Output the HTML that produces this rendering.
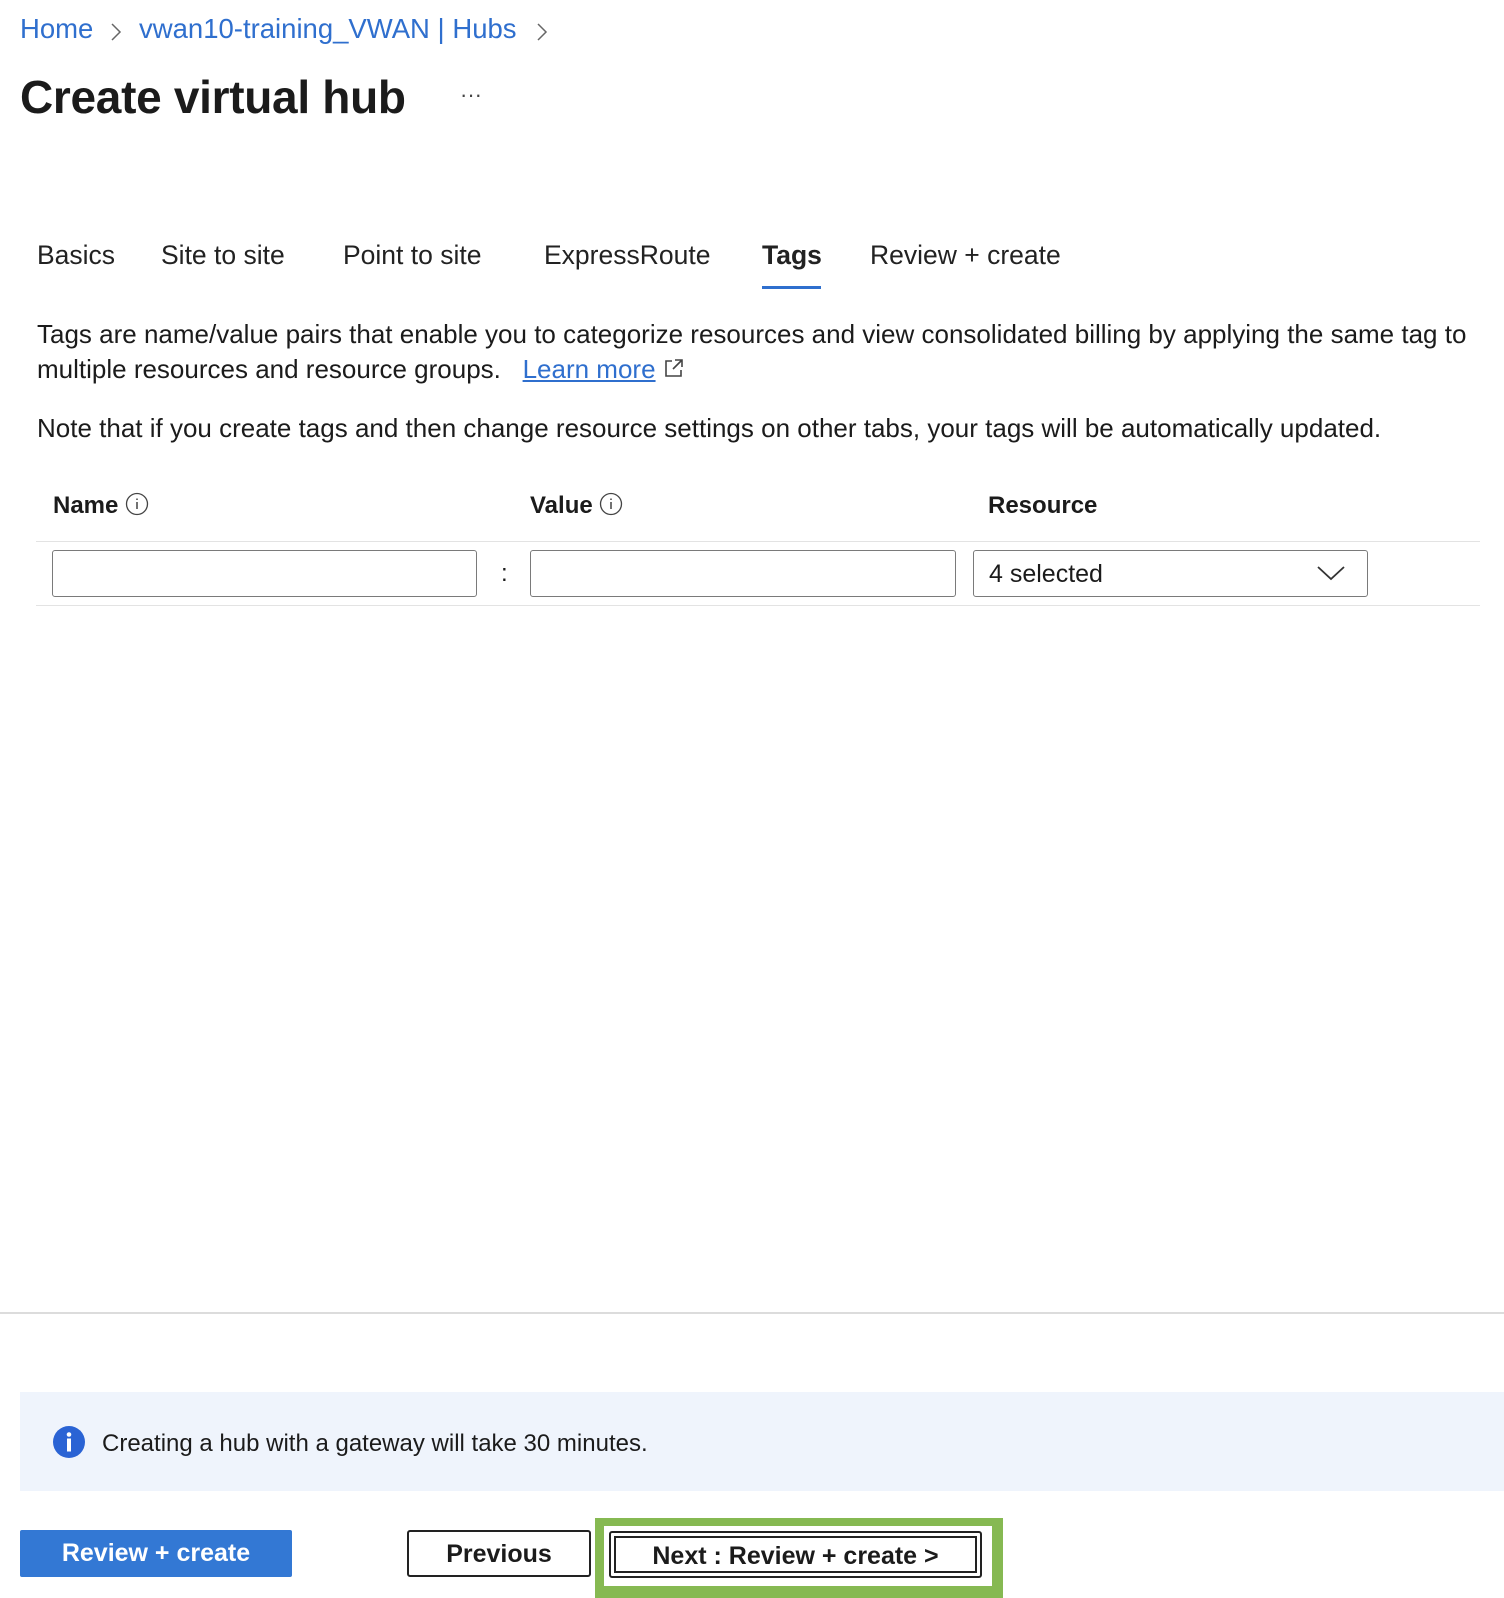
<!DOCTYPE html>
<html><head><style>
body{margin:0;width:1504px;height:1596px;background:#fff;font-family:"Liberation Sans",sans-serif;color:#1b1b1b;position:relative;overflow:hidden}
.a{position:absolute;white-space:nowrap}
.bc{color:#2f6fce;font-size:27.5px;top:13px}
.tab{font-size:26.5px;top:240px;color:#222}
.inp{position:absolute;border:1.5px solid #7a7a7a;border-radius:3px;box-sizing:border-box;height:47px;top:550px}
.btn{position:absolute;box-sizing:border-box;font-size:25px;font-weight:bold;text-align:center;line-height:44px;height:47px;top:1530px}
</style></head><body>
<div class="a bc" style="left:20px">Home</div>
<svg class="a" style="left:110px;top:22px" width="12" height="20"><path d="M2 2l8 8-8 8" fill="none" stroke="#666" stroke-width="1.5"/></svg>
<div class="a bc" style="left:139px">vwan10-training_VWAN | Hubs</div>
<svg class="a" style="left:536px;top:22px" width="12" height="20"><path d="M2 2l8 8-8 8" fill="none" stroke="#666" stroke-width="1.5"/></svg>
<div class="a" style="left:20px;top:70px;font-size:46px;font-weight:bold;letter-spacing:-0.3px">Create virtual hub</div>
<div class="a" style="left:460px;top:82px;font-size:22px;color:#444">···</div>

<div class="a tab" style="left:37px">Basics</div>
<div class="a tab" style="left:161px">Site to site</div>
<div class="a tab" style="left:343px">Point to site</div>
<div class="a tab" style="left:544px">ExpressRoute</div>
<div class="a tab" style="left:762px;font-weight:bold">Tags</div>
<div class="a" style="left:762px;top:286px;width:59px;height:3px;background:#2f6fce"></div>
<div class="a tab" style="left:870px">Review + create</div>

<div class="a" style="left:37px;top:317px;font-size:26px;line-height:35px">Tags are name/value pairs that enable you to categorize resources and view consolidated billing by applying the same tag to<br>multiple resources and resource groups. &nbsp;&nbsp;<span style="color:#2f6fce;text-decoration:underline">Learn more</span> <svg width="22" height="22" style="vertical-align:-1px"><path d="M9 4H3v15h15v-6M12 3h7v7M19 3l-9 9" fill="none" stroke="#444" stroke-width="1.6"/></svg></div>
<div class="a" style="left:37px;top:413px;font-size:26px">Note that if you create tags and then change resource settings on other tabs, your tags will be automatically updated.</div>

<div class="a" style="left:53px;top:492px;font-size:24px;font-weight:bold">Name <svg width="24" height="24" style="vertical-align:-3px"><circle cx="12" cy="12" r="10.5" fill="none" stroke="#444" stroke-width="1.3"/><path d="M12 10v7M12 6.5v1.5" stroke="#444" stroke-width="1.5"/></svg></div>
<div class="a" style="left:530px;top:492px;font-size:24px;font-weight:bold">Value <svg width="24" height="24" style="vertical-align:-3px"><circle cx="12" cy="12" r="10.5" fill="none" stroke="#444" stroke-width="1.3"/><path d="M12 10v7M12 6.5v1.5" stroke="#444" stroke-width="1.5"/></svg></div>
<div class="a" style="left:988px;top:492px;font-size:24px;font-weight:bold">Resource</div>
<div class="a" style="left:36px;top:541px;width:1444px;height:1px;background:#e3e3e3"></div>
<div class="inp" style="left:52px;width:425px"></div>
<div class="a" style="left:501px;top:560px;font-size:24px">:</div>
<div class="inp" style="left:530px;width:426px"></div>
<div class="inp" style="left:973px;width:395px;font-size:25px;padding-left:15px;line-height:46px">4 selected
<svg style="position:absolute;right:22px;top:14px" width="28" height="16"><path d="M1 2l13 12L27 2" fill="none" stroke="#333" stroke-width="1.8"/></svg></div>
<div class="a" style="left:36px;top:605px;width:1444px;height:1px;background:#e3e3e3"></div>

<div class="a" style="left:0;top:1312px;width:1504px;height:2px;background:#dcdcdc"></div>
<div class="a" style="left:20px;top:1392px;width:1484px;height:99px;background:#eff4fc"></div>
<svg class="a" style="left:53px;top:1426px" width="32" height="32"><circle cx="16" cy="16" r="16" fill="#2a63d4"/><circle cx="16" cy="8.5" r="2.3" fill="#fff"/><rect x="14" y="12.5" width="4" height="13" fill="#fff"/></svg>
<div class="a" style="left:102px;top:1430px;font-size:24px">Creating a hub with a gateway will take 30 minutes.</div>

<div class="btn" style="left:20px;width:272px;background:#3378d4;color:#fff;border-radius:2px;line-height:47px">Review + create</div>
<div class="btn" style="left:407px;width:184px;border:2px solid #222;border-radius:3px">Previous</div>
<div class="a" style="left:595px;top:1518px;width:408px;height:80px;background:#86b952"></div>
<div class="a" style="left:604px;top:1526px;width:388px;height:60px;background:#fff"></div>
<div class="btn" style="left:609px;width:373px;border:2px solid #222;border-radius:3px;top:1531px"><div style="position:absolute;left:3px;right:3px;top:3px;bottom:3px;border:2px solid #222;line-height:36px">Next : Review + create &gt;</div></div>
</body></html>
